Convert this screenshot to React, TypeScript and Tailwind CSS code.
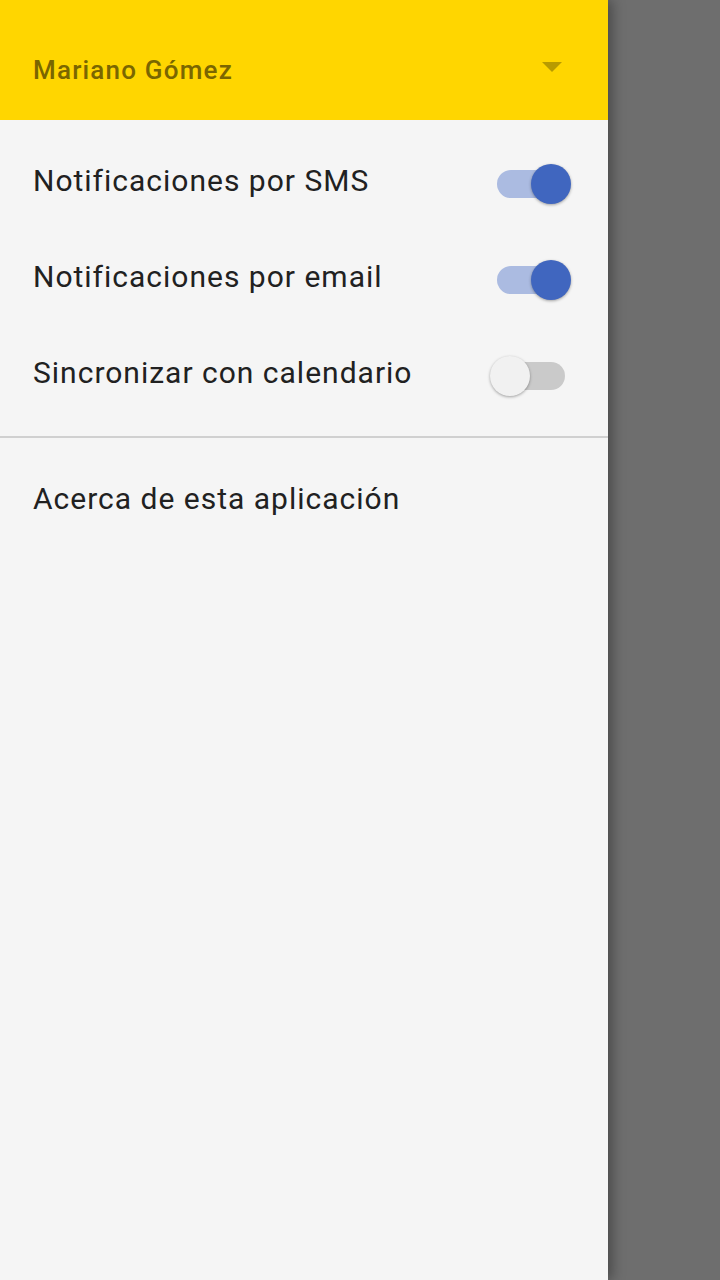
import React, { useState } from 'react'

// Android-style toggle
function Toggle({ on, onChange }: { on: boolean; onChange: () => void }) {
    return (
        <button onClick={onChange} className="relative w-[80px] h-[44px] mt-[7px] flex items-center shrink-0">
            <div className={`absolute left-[13px] w-[68px] h-[28px] rounded-full ${on ? 'bg-[#abbbe1]' : 'bg-[#cacaca]'}`} />
            <div
                className={`absolute top-[2px] w-[40px] h-[40px] rounded-full shadow-[0_1px_3px_rgba(0,0,0,0.35)] ${on ? 'left-[47px] bg-[#4066bf]' : 'left-[6px] bg-[#f1f1f1]'}`}
            />
        </button>
    )
}

export default function App() {
    const [settings, setSettings] = useState({ sms: true, email: true, cal: false })
    const flip = (k: 'sms' | 'email' | 'cal') => setSettings(s => ({ ...s, [k]: !s[k] }))

    const rows: { key: 'sms' | 'email' | 'cal'; label: string }[] = [
        { key: 'sms', label: 'Notificaciones por SMS' },
        { key: 'email', label: 'Notificaciones por email' },
        { key: 'cal', label: 'Sincronizar con calendario' },
    ]

    return (
        <div className="h-[1280px] w-[720px] bg-[#6e6e6e] flex font-['Roboto',sans-serif] overflow-hidden">
            {/* Drawer */}
            <div className="w-[608px] h-full bg-[#f5f5f5] flex flex-col shadow-[4px_0_12px_rgba(0,0,0,0.35)] relative z-10">
                {/* Header */}
                <header className="h-[120px] bg-[#ffd600] flex items-center justify-between pl-[33px] pr-[46px] pt-[20px]">
                    <span className="text-[26px] font-medium text-[#7a6600] tracking-[1.2px]">Mariano Gómez</span>
                    <svg width="20" height="10" viewBox="0 0 20 10" className="mb-[6px]">
                        <path d="M0 0 L20 0 L10 10 Z" fill="#b89b00" />
                    </svg>
                </header>

                <div className="pt-[12px] pb-[16px]">
                    {rows.map(r => (
                        <div key={r.key} className="h-[96px] flex items-center justify-between pl-[33px] pr-[44px]">
                            <span className="text-[30px] text-[#212121] tracking-[1px]">{r.label}</span>
                            <Toggle on={settings[r.key]} onChange={() => flip(r.key)} />
                        </div>
                    ))}
                </div>

                <div className="h-[2px] bg-[#d0d0d0]" />

                <div className="pt-[12px]">
                    <div className="h-[96px] flex items-center pl-[33px]">
                        <span className="text-[30px] text-[#212121] tracking-[1px]">Acerca de esta aplicación</span>
                    </div>
                </div>
            </div>
        </div>
    )
}
